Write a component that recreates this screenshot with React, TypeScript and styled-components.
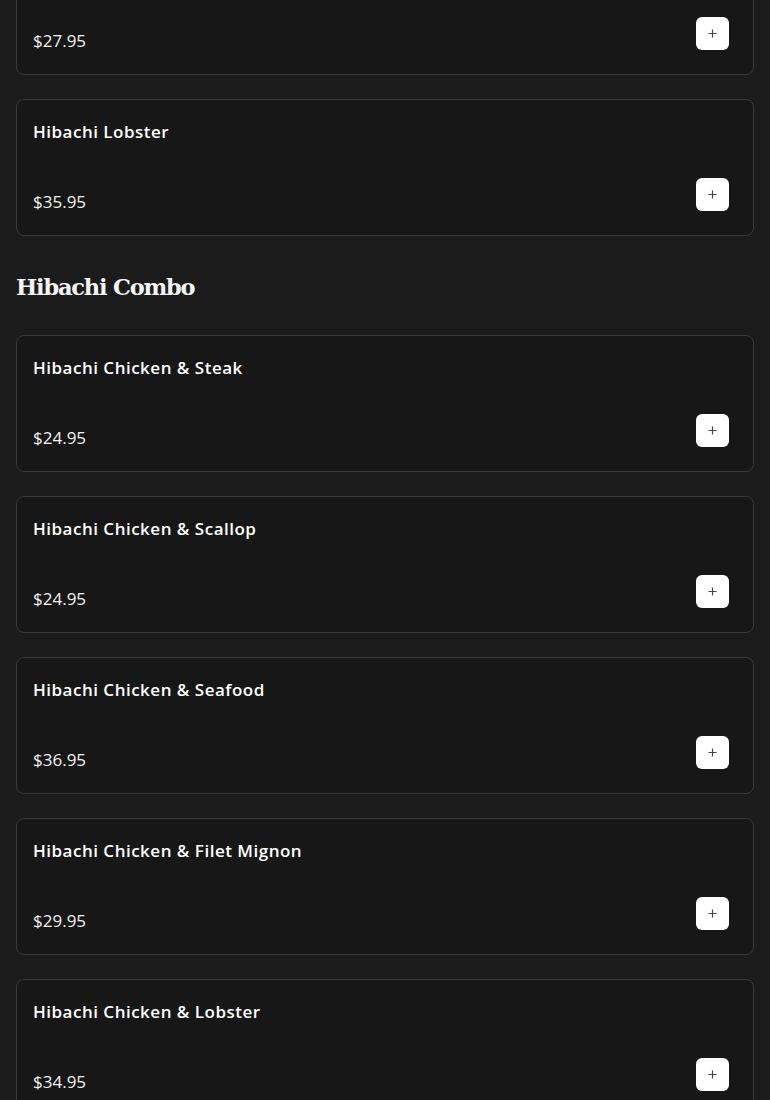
import React from "react";
import styled, { createGlobalStyle } from "styled-components";

const Global = createGlobalStyle`
  html, body { margin: 0; padding: 0; background: #1b1b1b; }
  body { font-family: "Open Sans", "Liberation Sans", sans-serif; color: #fff; overflow: hidden; }
`;

const Page = styled.div`
  padding: 0 16px;
  margin-top: -62px;
`;

const Section = styled.section`
  display: flex;
  flex-direction: column;
  gap: 24px;
`;

const Heading = styled.h2`
  margin: 33px 0 30px;
  font-family: "DejaVu Serif", serif;
  font-weight: 700;
  font-size: 22.5px;
  line-height: 36px;
  letter-spacing: -1.2px;
  color: #f4f4f4;
`;

const Card = styled.div`
  background: #171717;
  border: 1px solid #3a3a3a;
  border-radius: 8px;
  padding: 17px 24px 24px 16px;
  display: flex;
  flex-direction: column;
  gap: 31px;
`;

const Title = styled.div`
  font-size: 17px;
  font-weight: 600;
  line-height: 30px;
  letter-spacing: 0.5px;
  color: #fff;
`;

const Row = styled.div`
  display: flex;
  justify-content: space-between;
  align-items: flex-end;
`;

const Price = styled.div`
  font-size: 17px;
  line-height: 18px;
  font-weight: 400;
  color: #f2f2f2;
`;

const AddButton = styled.button`
  width: 33px;
  height: 33px;
  border: none;
  border-radius: 6px;
  background: #fff;
  display: flex;
  align-items: center;
  justify-content: center;
  padding: 0;
  cursor: pointer;
`;

const PlusIcon = () => (
  <svg width="11" height="11" viewBox="0 0 11 11" fill="none">
    <path d="M5.5 1.5v8M1.5 5.5h8" stroke="#444" strokeWidth="1.2" />
  </svg>
);

type Item = { name: string; price: string };

const Dish = ({ item }: { item: Item }) => (
  <Card>
    <Title>{item.name}</Title>
    <Row>
      <Price>{item.price}</Price>
      <AddButton aria-label="Add">
        <PlusIcon />
      </AddButton>
    </Row>
  </Card>
);

const first: Item[] = [
  { name: "Hibachi Scallop", price: "$27.95" },
  { name: "Hibachi Lobster", price: "$35.95" },
];

const combo: Item[] = [
  { name: "Hibachi Chicken & Steak", price: "$24.95" },
  { name: "Hibachi Chicken & Scallop", price: "$24.95" },
  { name: "Hibachi Chicken & Seafood", price: "$36.95" },
  { name: "Hibachi Chicken & Filet Mignon", price: "$29.95" },
  { name: "Hibachi Chicken & Lobster", price: "$34.95" },
];

export default function App() {
  return (
    <>
      <Global />
      <Page>
        <Section>
          {first.map((i) => (
            <Dish key={i.name} item={i} />
          ))}
        </Section>
        <Heading>Hibachi Combo</Heading>
        <Section>
          {combo.map((i) => (
            <Dish key={i.name} item={i} />
          ))}
        </Section>
      </Page>
    </>
  );
}
